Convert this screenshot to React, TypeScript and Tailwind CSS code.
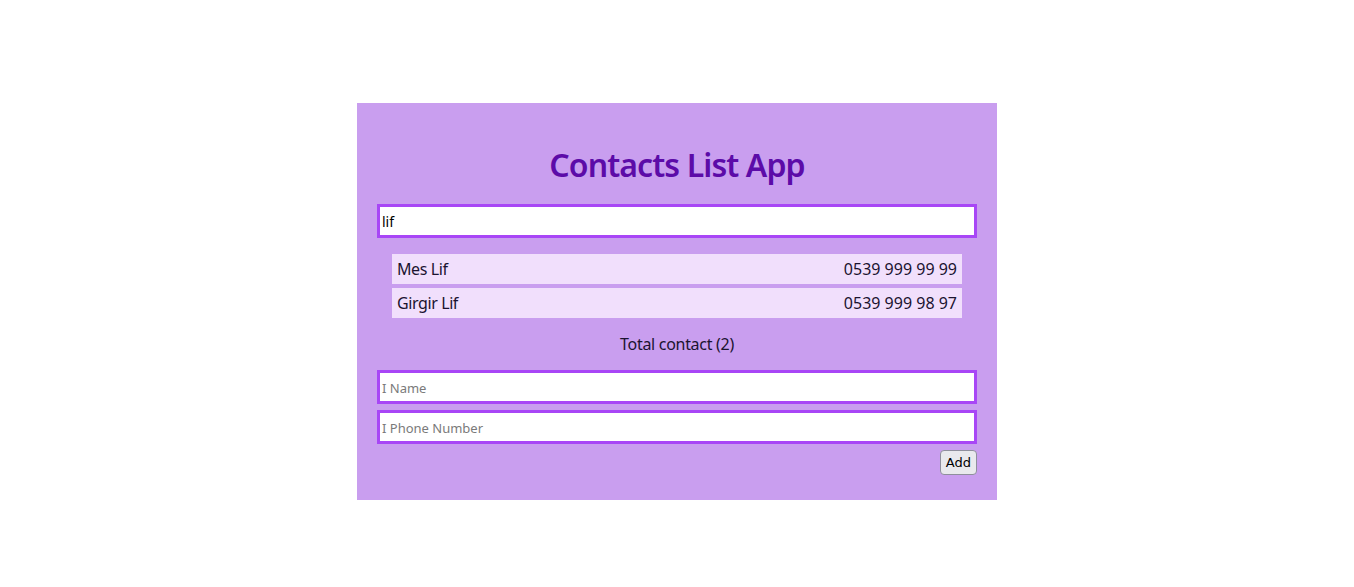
const contacts = [
  { name: "Mes Lif", phone: "0539 999 99 99" },
  { name: "Girgir Lif", phone: "0539 999 98 97" },
];

export default function App() {
  return (
    <div className="w-full min-h-[587px] bg-white flex justify-center pt-[103px] font-['Noto_Sans',sans-serif]">
      <div className="w-[640px] h-[397px] bg-[#c99eef] px-5 pt-5 flex flex-col">
        {/* Title */}
        <h1 className="mt-[22px] h-10 leading-10 text-center text-[32px] font-semibold tracking-[-0.9px] text-[#5c0ba8]">
          Contacts List App
        </h1>

        {/* Filter */}
        <input
          defaultValue="lif"
          className="mt-[19px] h-[34px] w-full bg-white border-[3px] border-[#a846f6] px-[2px] text-[14px] text-black outline-none"
        />

        {/* List */}
        <ul className="mt-4 mx-[15px] flex flex-col gap-1">
          {contacts.map((c) => (
            <li
              key={c.name}
              className="h-[30px] bg-[#f1dffc] px-[5px] flex items-center justify-between text-[16px] text-[#1b1330]"
            >
              <span className="tracking-[-0.4px]">{c.name}</span>
              <span>{c.phone}</span>
            </li>
          ))}
        </ul>

        <p className="mt-[14px] h-6 leading-6 text-center text-[16px] tracking-[-0.3px] text-[#1b1330]">
          Total contact ({contacts.length})
        </p>

        {/* Form */}
        <input
          placeholder="I Name"
          className="mt-[14px] h-[34px] w-full bg-white border-[3px] border-[#a846f6] px-[2px] pt-[1px] text-[13px] outline-none placeholder:text-[#7a7a7a]"
        />
        <input
          placeholder="I Phone Number"
          className="mt-[6px] h-[34px] w-full bg-white border-[3px] border-[#a846f6] px-[2px] pt-[1px] text-[13px] outline-none placeholder:text-[#7a7a7a]"
        />
        <div className="mt-[6px] flex justify-end">
          <button className="h-[25px] px-[5px] pt-[1px] rounded-[4px] border border-[#8f8f9d] bg-[#e9e9ed] text-[13px] text-black font-['DejaVu_Sans',sans-serif]">
            Add
          </button>
        </div>
      </div>
    </div>
  );
}
